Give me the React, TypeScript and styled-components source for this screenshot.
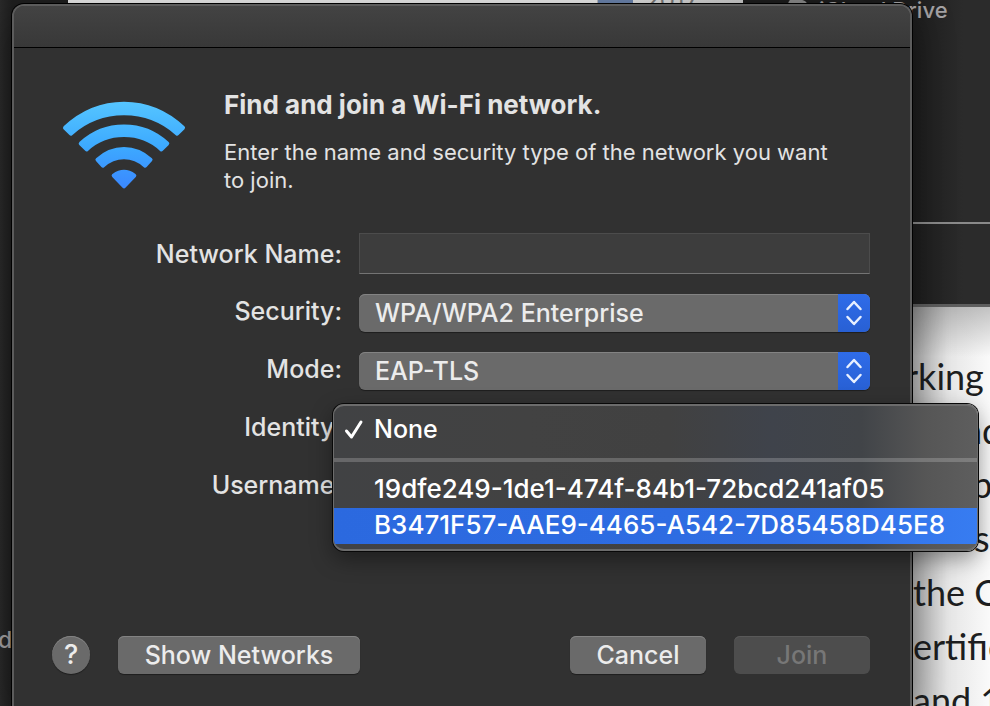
import React from "react";
import styled, { createGlobalStyle } from "styled-components";

const Global = createGlobalStyle`
  * { box-sizing: border-box; }
  body { margin: 0; background: #232323; font-family: Inter, "Liberation Sans", sans-serif; }
  button, input, select { font-family: inherit; }
`;

const Desktop = styled.main`
  position: relative;
  min-height: 100vh;
  overflow: hidden;
  display: flex;
  padding: 4px 78px 0 12px;
  background: linear-gradient(90deg, #2a2a2a, #1f1f1f 12px);
`;

const Backdrop = styled.div`
  position: absolute;
  inset: 0;
  overflow: hidden;
`;

const CalendarWindow = styled.div`
  position: absolute;
  top: 0;
  left: 68px;
  right: 247px;
  height: 12px;
  display: flex;
  justify-content: flex-end;
  background: #ececec;
  color: #777;
  font-size: 24px;
  line-height: 2px;
`;

const CalendarEvent = styled.div`
  width: 36px;
  border-left: 1px solid #bbb;
  background: #6c84ae;
`;

const CalendarYear = styled.div`
  width: 110px;
  padding-left: 12px;
  background: linear-gradient(90deg, #e0e0e0, #ccc);
`;

const FinderWindow = styled.aside`
  position: absolute;
  top: 0;
  left: 743px;
  right: 0;
  height: 307px;
  display: flex;
  flex-direction: column;
  border-bottom: 3px solid #5e5e5e;
  background: linear-gradient(90deg, #1d1d1d 169px, #2b2b2b 220px);
`;

const FinderItem = styled.div`
  height: 224px;
  padding-left: 40px;
  display: flex;
  align-items: flex-start;
  gap: 12px;
  border-bottom: 2px solid #8a8a8a;
  color: #a4a2a4;
  font-size: 22px;
  font-weight: 500;
  line-height: 20px;
`;

const ArticleWindow = styled.article`
  position: absolute;
  top: 307px;
  bottom: 0;
  left: 912px;
  right: 0;
  padding-top: 42px;
  overflow: hidden;
  background:
    linear-gradient(180deg, rgba(0, 0, 0, 0.22), transparent 50px),
    linear-gradient(90deg, #b4b4b4, #e6e6e6 36px, #fafafa 78px);
`;

const ArticleLine = styled.div<{ $indent: number }>`
  margin-left: ${(p) => p.$indent}px;
  color: #1d1e20;
  font-family: Lato, "Liberation Sans", sans-serif;
  font-size: 36px;
  line-height: 54px;
  white-space: nowrap;
`;

const SidebarText = styled.div`
  position: absolute;
  left: -2px;
  top: 626px;
  color: #a4a2a4;
  font-size: 23px;
  font-weight: 500;
  line-height: 28px;
`;

const Dialog = styled.section`
  position: relative;
  flex: 1;
  min-width: 0;
  display: flex;
  flex-direction: column;
  border: 2px solid #5c5c5c;
  border-bottom: 0;
  border-radius: 12px 12px 0 0;
  background: #313131;
  box-shadow: 0 0 0 1px #000, 0 10px 40px rgba(0, 0, 0, 0.4);
  color: #e3e3e3;
`;

const TitleBar = styled.header`
  height: 42px;
  border-bottom: 1px solid #000;
  border-radius: 10px 10px 0 0;
  background: linear-gradient(#434343, #383838);
`;

const Body = styled.form`
  flex: 1;
  display: flex;
  flex-direction: column;
  padding: 40px 40px 32px 38px;
`;

const Intro = styled.div`
  display: grid;
  grid-template-columns: 124px 1fr;
  column-gap: 38px;
  padding-left: 10px;
`;

const WifiIcon = styled.svg`
  width: 124px;
  height: 90px;
  margin-top: 13px;
`;

const Title = styled.h1`
  margin: 0;
  font-size: 26px;
  line-height: 34px;
  font-weight: 700;
`;

const Description = styled.p`
  max-width: 620px;
  margin: 16px 0 0;
  font-size: 22px;
  line-height: 28px;
`;

const Fields = styled.div`
  display: grid;
  grid-template-columns: 290px 1fr;
  column-gap: 17px;
  row-gap: 20px;
  margin-top: 39px;
`;

const Label = styled.label<{ $centered?: boolean }>`
  align-self: ${(p) => (p.$centered ? "center" : "start")};
  text-align: right;
  font-size: 25px;
  font-weight: 500;
  line-height: 34px;
`;

const TextField = styled.input`
  width: 100%;
  height: 41px;
  padding: 0 12px;
  border: 1px solid #4c4c4c;
  border-bottom: 1px solid #747474;
  border-radius: 0;
  outline: 0;
  background: #3d3d3d;
  color: #e3e3e3;
  font-size: 25px;
`;

const SelectBox = styled.div`
  position: relative;
  height: 38px;
  display: grid;
  grid-template-columns: 1fr 32px;
  border-radius: 6px;
  overflow: hidden;
  background: #6a6a6a;
  box-shadow: 0 1px 1px rgba(0, 0, 0, 0.4), inset 0 1px #838383;
`;

const Select = styled.select`
  grid-area: 1 / 1 / 2 / 3;
  width: 100%;
  padding: 0 40px 0 16px;
  appearance: none;
  border: 0;
  outline: 0;
  background: transparent;
  color: #ececec;
  font-size: 25px;
  font-weight: 500;
  line-height: 36px;
`;

const Stepper = styled.span`
  grid-area: 1 / 2;
  display: flex;
  align-items: center;
  justify-content: center;
  background: linear-gradient(#2f6ce9, #2860d4);
  pointer-events: none;
`;

const MenuAnchor = styled.div`
  position: relative;
  height: 38px;
`;

const Menu = styled.div`
  position: absolute;
  z-index: 2;
  top: -6px;
  left: -26px;
  right: -108px;
  display: flex;
  flex-direction: column;
  padding-bottom: 5px;
  border: 2px solid #6c6c6c;
  border-width: 2px 1px;
  border-radius: 11px;
  overflow: hidden;
  background: linear-gradient(90deg, #414244, #424242 30%, #414141 52%, #3f434b 68%, #414448 82%, #565656 92%, #5e5e5e);
  box-shadow: 0 0 0 1px #080808, 0 8px 22px rgba(0, 0, 0, 0.4);
`;

const MenuItem = styled.button<{ $active?: boolean; $tall?: boolean }>`
  height: ${(p) => (p.$tall ? 52 : 36)}px;
  display: grid;
  grid-template-columns: 30px 1fr;
  align-items: start;
  padding: ${(p) => (p.$tall ? "6px" : "0")} 10px 0;
  border: 0;
  background: ${(p) => (p.$active ? "linear-gradient(90deg, #2b69df, #2f6de3 70%, #377cf1)" : "transparent")};
  color: #fff;
  font-size: ${(p) => (p.$tall ? 25 : 26)}px;
  font-weight: 500;
  line-height: 34px;
  text-align: left;
  white-space: nowrap;
`;

const Divider = styled.hr`
  width: 100%;
  height: 4px;
  margin: 0 0 10px;
  border: 0;
  background: rgba(255, 255, 255, 0.2);
`;

const Check = styled.svg`
  width: 20px;
  height: 34px;
`;

const ItemText = styled.span`
  grid-column: 2;
`;

const Footer = styled.footer`
  display: flex;
  align-items: center;
  gap: 28px;
  margin-top: auto;
`;

const PushButton = styled.button<{ $wide?: boolean }>`
  width: ${(p) => (p.$wide ? 242 : 136)}px;
  height: 38px;
  padding: 0;
  border: 0;
  border-radius: 6px;
  background: #6a6a6a;
  box-shadow: 0 1px 1px rgba(0, 0, 0, 0.4), inset 0 1px #838383;
  color: #ececec;
  font-size: 25px;
  font-weight: 500;
  line-height: 36px;
  &:disabled {
    background: #4d4d4d;
    box-shadow: inset 0 1px #595959;
    color: #777;
  }
`;

const HelpButton = styled(PushButton)`
  width: 38px;
  border-radius: 50%;
  font-size: 27px;
`;

const Spacer = styled.div`
  flex: 1;
`;

const articleLines = [
  { text: "rking", indent: -7 },
  { text: "nd", indent: 50 },
  { text: "p", indent: 60 },
  { text: "se", indent: 62 },
  { text: "the C", indent: 1 },
  { text: "ertific", indent: 1 },
  { text: "and 1", indent: 1 },
];

function Chevrons() {
  return (
    <Stepper>
      <svg width="18" height="28" viewBox="0 0 18 28" fill="none" stroke="#e8f0ff" strokeWidth="2.5" strokeLinecap="round" strokeLinejoin="round">
        <path d="M2.500 10 9 3l6.500 7M2.500 18 9 25l6.500-7" />
      </svg>
    </Stepper>
  );
}

function PopUp({ id, value }: { id: string; value: string }) {
  return (
    <SelectBox>
      <Select id={id} defaultValue={value}>
        <option>{value}</option>
      </Select>
      <Chevrons />
    </SelectBox>
  );
}

export default function App() {
  return (
    <>
      <Global />
      <Desktop>
        <Backdrop>
          <CalendarWindow>
            <CalendarEvent />
            <CalendarYear>2017</CalendarYear>
          </CalendarWindow>
          <FinderWindow>
            <FinderItem>
              <svg width="24" height="16" viewBox="0 0 24 16" fill="#8a8a8a">
                <path d="M6 14a5 5 0 0 1-1-9 7 7 0 0 1 12-5 5 5 0 0 1 2 14z" />
              </svg>
              iCloud Drive
            </FinderItem>
          </FinderWindow>
          <ArticleWindow>
            {articleLines.map((line) => (
              <ArticleLine key={line.text} $indent={line.indent}>{line.text}</ArticleLine>
            ))}
          </ArticleWindow>
          <SidebarText>d</SidebarText>
        </Backdrop>
        <Dialog role="dialog" aria-labelledby="title">
          <TitleBar />
          <Body onSubmit={(e) => e.preventDefault()}>
            <Intro>
              <WifiIcon viewBox="0 0 126 90" fill="none" strokeLinejoin="round">
                <defs>
                  <linearGradient id="wifi" gradientUnits="userSpaceOnUse" x1="0" y1="0" x2="0" y2="90">
                    <stop offset="0" stopColor="#55c5ff" />
                    <stop offset="0.5" stopColor="#3daaff" />
                    <stop offset="1" stopColor="#3a86ff" />
                  </linearGradient>
                </defs>
                <g fill="url(#wifi)" stroke="url(#wifi)" strokeWidth="4">
                  <path d="M3 26.500C38-6 88-6 123 26.500L117 32.500C86 5 40 5 9 32.500Z" />
                  <path d="M19 42.500C44 19.500 82 19.500 107 42.500L101 48.500C80 29 46 29 25 48.500Z" />
                  <path d="M36 59C52 44.500 74 44.500 90 59L84.500 65C72 53.500 54 53.500 41.500 65Z" />
                  <path d="M52.500 75Q63 67.500 73.500 75L63 86Z" />
                </g>
              </WifiIcon>
              <div>
                <Title id="title">Find and join a Wi-Fi network.</Title>
                <Description>Enter the name and security type of the network you want to join.</Description>
              </div>
            </Intro>
            <Fields>
              <Label htmlFor="name" $centered>Network Name:</Label>
              <TextField id="name" type="text" />
              <Label htmlFor="security">Security:</Label>
              <PopUp id="security" value="WPA/WPA2 Enterprise" />
              <Label htmlFor="mode">Mode:</Label>
              <PopUp id="mode" value="EAP-TLS" />
              <Label id="identity">Identity:</Label>
              <MenuAnchor>
                <Menu role="menu" aria-labelledby="identity">
                  <MenuItem type="button" role="menuitemradio" aria-checked="true" $tall>
                    <Check viewBox="0 0 20 34" fill="none" stroke="#fff" strokeWidth="3" strokeLinecap="round" strokeLinejoin="round">
                      <path d="M2.500 19 7.500 25 17 10" />
                    </Check>
                    <ItemText>None</ItemText>
                  </MenuItem>
                  <Divider />
                  <MenuItem type="button" role="menuitemradio" aria-checked="false">
                    <ItemText>19dfe249-1de1-474f-84b1-72bcd241af05</ItemText>
                  </MenuItem>
                  <MenuItem type="button" role="menuitemradio" aria-checked="false" $active>
                    <ItemText>B3471F57-AAE9-4465-A542-7D85458D45E8</ItemText>
                  </MenuItem>
                </Menu>
              </MenuAnchor>
              <Label>Username:</Label>
            </Fields>
            <Footer>
              <HelpButton type="button" aria-label="Help">?</HelpButton>
              <PushButton type="button" $wide>Show Networks</PushButton>
              <Spacer />
              <PushButton type="button">Cancel</PushButton>
              <PushButton type="submit" disabled>Join</PushButton>
            </Footer>
          </Body>
        </Dialog>
      </Desktop>
    </>
  );
}
